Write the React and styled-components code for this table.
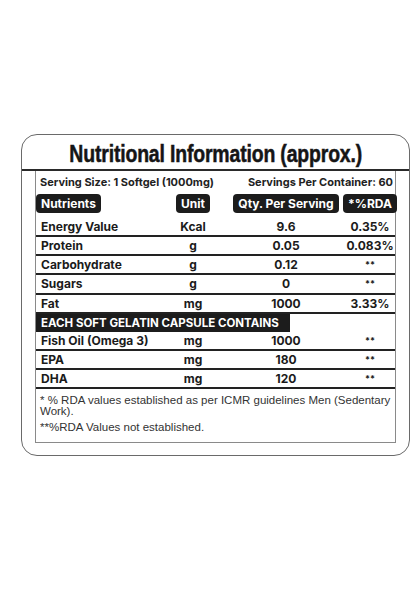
import React from "react";
import styled, { createGlobalStyle } from "styled-components";

const GlobalStyle = createGlobalStyle`
  html, body {
    margin: 0;
    padding: 0;
    background: #fff;
  }
  body {
    font-family: Inter, "Noto Sans", sans-serif;
    color: #1b1b1b;
  }
`;

const nutrients = [
  { name: "Energy Value", unit: "Kcal", qty: "9.6", rda: "0.35%", first: true },
  { name: "Protein", unit: "g", qty: "0.05", rda: "0.083%" },
  { name: "Carbohydrate", unit: "g", qty: "0.12", rda: "**" },
  { name: "Sugars", unit: "g", qty: "0", rda: "**" },
  { name: "Fat", unit: "mg", qty: "1000", rda: "3.33%" },
];

const capsule = [
  { name: "Fish Oil (Omega 3)", unit: "mg", qty: "1000", rda: "**" },
  { name: "EPA", unit: "mg", qty: "180", rda: "**" },
  { name: "DHA", unit: "mg", qty: "120", rda: "**" },
];

const App = () => {
  return (
    <Page>
      <GlobalStyle />
      <Card>
        <Title>
          <TitleText>Nutritional Information (approx.)</TitleText>
        </Title>
        <Table>
          <ServingRow>
            <span>Serving Size: 1 Softgel (1000mg)</span>
            <span>Servings Per Container: 60</span>
          </ServingRow>
          <HeadRow>
            <Pill align="start">Nutrients</Pill>
            <Pill>Unit</Pill>
            <Pill>Qty. Per Serving</Pill>
            <Pill>*%RDA</Pill>
          </HeadRow>
          {nutrients.map((n) => (
            <Row key={n.name} first={n.first}>
              <Name>{n.name}</Name>
              <Cell>{n.unit}</Cell>
              <Cell>{n.qty}</Cell>
              <Cell small={n.rda === "**"}>{n.rda}</Cell>
            </Row>
          ))}
          <Band>
            <BandLabel>EACH SOFT GELATIN CAPSULE CONTAINS</BandLabel>
          </Band>
          {capsule.map((n) => (
            <Row key={n.name}>
              <Name>{n.name}</Name>
              <Cell>{n.unit}</Cell>
              <Cell>{n.qty}</Cell>
              <Cell small={n.rda === "**"}>{n.rda}</Cell>
            </Row>
          ))}
          <Notes>
            <Note>* % RDA values established as per ICMR guidelines Men (Sedentary Work).</Note>
            <Note>**%RDA Values not established.</Note>
          </Notes>
        </Table>
      </Card>
    </Page>
  );
};

const Page = styled.div`
  width: 416px;
  height: 589px;
  padding: 134px 0 0 21px;
  box-sizing: border-box;
`;

const Card = styled.div`
  width: 389px;
  height: 322px;
  box-sizing: border-box;
  border: 1.5px solid #6a6a6a;
  border-radius: 16px;
  padding: 0 13px 12px;
  display: flex;
  flex-direction: column;
`;

const Title = styled.h1`
  margin: 0 -13px;
  height: 36px;
  box-sizing: border-box;
  border-bottom: 2px solid #2a2a2a;
  display: flex;
  align-items: flex-end;
  justify-content: center;
  padding-bottom: 3px;
  font-family: "Liberation Sans", Arial, sans-serif;
  font-weight: 700;
  font-size: 24px;
  line-height: 1;
  color: #151515;
  white-space: nowrap;
`;

const TitleText = styled.span`
  display: inline-block;
  transform: scaleX(0.81);
  transform-origin: center;
  letter-spacing: -0.2px;
  -webkit-text-stroke: 0.5px #151515;
`;

const Table = styled.div`
  flex: 1;
  border: 1.5px solid #8a8a8a;
  border-top: none;
  display: flex;
  flex-direction: column;
`;

const ServingRow = styled.div`
  height: 21px;
  display: flex;
  align-items: center;
  justify-content: space-between;
  padding: 0 2px 0 4px;
  font-size: 11px;
  font-weight: 700;
  color: #222;
`;

const grid = `
  display: grid;
  grid-template-columns: 124px 66px 120px 48px;
  align-items: center;
`;

const HeadRow = styled.div`
  ${grid}
  height: 19px;
  margin-top: 2px;
`;

const Pill = styled.span`
  justify-self: ${(p) => (p.align === "start" ? "start" : "center")};
  height: 19px;
  display: flex;
  align-items: center;
  padding: 0 5px;
  border-radius: 4px;
  background: #1c1c1c;
  color: #fff;
  font-size: 12px;
  font-weight: 700;
  white-space: nowrap;
`;

const Row = styled.div`
  ${grid}
  height: ${(p) => (p.first ? "24px" : "19.2px")};
  padding-top: ${(p) => (p.first ? "4px" : "0")};
  box-sizing: border-box;
  border-bottom: 2px solid #222;
  font-size: 12px;
  font-weight: 700;
  color: #1b1b1b;
`;

const Name = styled.span`
  padding-left: 5px;
  white-space: nowrap;
`;

const Cell = styled.span`
  justify-self: center;
  white-space: nowrap;
  font-size: ${(p) => (p.small ? "9px" : "12px")};
`;

const Band = styled.div`
  height: 18px;
  display: flex;
`;

const BandLabel = styled.span`
  width: 254px;
  box-sizing: border-box;
  background: #1c1c1c;
  color: #fff;
  font-size: 11.5px;
  font-weight: 700;
  display: flex;
  align-items: center;
  padding-left: 5px;
  white-space: nowrap;
`;

const Notes = styled.div`
  padding: 6px 4px 0 4px;
  color: #333;
  font-family: "Liberation Sans", Arial, sans-serif;
  font-size: 11.5px;
  line-height: 11px;
`;

const Note = styled.p`
  margin: 0 0 5px;
`;

export default App;
